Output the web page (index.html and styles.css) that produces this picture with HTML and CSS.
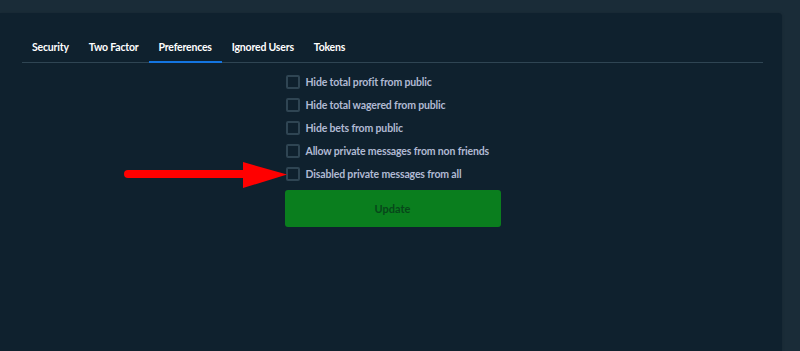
FILE: index.html
```html
<!DOCTYPE html>
<html>
<head>
<meta charset="utf-8">
<link rel="stylesheet" href="styles.css">
</head>
<body>
<div class="panel">
  <nav class="tabs">
    <span class="tab">Security</span>
    <span class="tab">Two Factor</span>
    <span class="tab active">Preferences</span>
    <span class="tab">Ignored Users</span>
    <span class="tab">Tokens</span>
  </nav>
  <form class="prefs">
    <label class="row"><span class="box"></span><span class="lbl">Hide total profit from public</span></label>
    <label class="row"><span class="box"></span><span class="lbl">Hide total wagered from public</span></label>
    <label class="row"><span class="box"></span><span class="lbl">Hide bets from public</span></label>
    <label class="row"><span class="box"></span><span class="lbl">Allow private messages from non friends</span></label>
    <label class="row"><span class="box"></span><span class="lbl">Disabled private messages from all</span></label>
    <button type="button" class="update">Update</button>
  </form>
</div>
<svg class="arrow" width="170" height="32" viewBox="0 0 170 32">
  <line x1="7" y1="14" x2="128" y2="14" stroke="#ff0000" stroke-width="8" stroke-linecap="round"/>
  <polygon points="122,2 166,14.5 122,28" fill="#ff0000"/>
</svg>
</body>
</html>
```
FILE: styles.css
```css
html, body {
  margin: 0;
  padding: 0;
  height: 100%;
}
body {
  background: #1a2c38;
  font-family: Lato, "Open Sans", sans-serif;
  overflow: hidden;
  position: relative;
}
.panel {
  margin: 13px 18px 0 0;
  height: 338px;
  background: #0f212e;
  border-radius: 0 4px 0 0;
  padding: 0 19px 0 22px;
  box-sizing: border-box;
  box-shadow: 0 0 3px rgba(0,0,0,0.15);
}
.tabs {
  display: flex;
  padding-top: 29px;
  border-bottom: 1px solid #2f4553;
}
.tab {
  padding: 0 10px 8px;
  font-size: 10.5px;
  font-weight: 700;
  color: #ffffff;
  line-height: 11px;
  margin-bottom: -1px;
  border-bottom: 2px solid transparent;
  letter-spacing: -0.2px;
}
.tab.active {
  border-bottom-color: #1475e1;
}
.prefs {
  width: 216px;
  margin: 12px auto 0;
  display: flex;
  flex-direction: column;
}
.row {
  display: flex;
  align-items: center;
  height: 14px;
  margin-bottom: 9px;
}
.box {
  width: 14px;
  height: 14px;
  box-sizing: border-box;
  border: 2px solid #2f4553;
  border-radius: 2px;
  margin: 0 6px 0 1px;
  flex: none;
}
.lbl {
  font-size: 10.5px;
  font-weight: 700;
  color: #b1bad3;
  white-space: nowrap;
  letter-spacing: -0.15px;
}
.update {
  margin-top: 0;
  height: 37px;
  width: 216px;
  border: none;
  border-radius: 3px;
  background: #0a7e1e;
  color: #07471a;
  font-family: Lato, "Open Sans", sans-serif;
  font-size: 11px;
  font-weight: 700;
}
.arrow {
  position: absolute;
  left: 121px;
  top: 160px;
}
```
